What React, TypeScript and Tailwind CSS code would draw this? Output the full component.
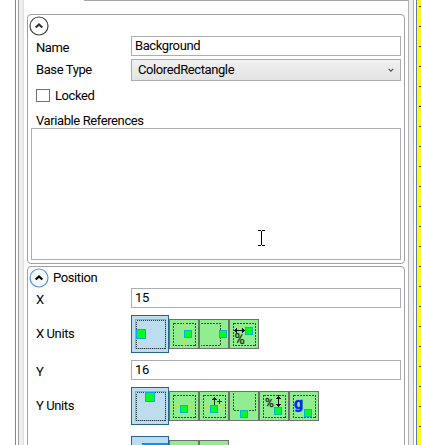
import type { ReactNode } from 'react';

function Expander({ hot = false }: { hot?: boolean }) {
  return (
    <svg width="20" height="20" viewBox="0 0 20 20" className="shrink-0">
      <circle cx="10" cy="10" r="9" fill={hot ? '#f3f9ff' : '#fff'} stroke={hot ? '#5593e8' : '#444'} strokeWidth="1.2" />
      <path d="M6.7 11.6 10 8.4l3.3 3.2" fill="none" stroke={hot ? '#000' : '#333'} strokeWidth="2.1" />
    </svg>
  );
}

function Label({ children, className = '' }: { children: ReactNode; className?: string }) {
  return <span className={`block whitespace-nowrap leading-4 ${className}`}>{children}</span>;
}

function Field({ value }: { value: string }) {
  return <div className="h-5 w-[270px] border border-[#abadb3] bg-white pl-[3px] leading-[17px]">{value}</div>;
}

type Kind = 'left' | 'center' | 'right' | 'percentX' | 'top' | 'middle' | 'invert' | 'bottom' | 'percentY' | 'baseline' | 'none';

const squares: Record<Kind, [number, number]> = {
  left: [4, 13], center: [14, 10], right: [19, 10], percentX: [15, 7],
  top: [13, 4], middle: [10, 13], invert: [10, 13], bottom: [10, 18], percentY: [14, 15], baseline: [14, 17], none: [0, 0],
};

function UnitButton({ kind, selected = false }: { kind: Kind; selected?: boolean }) {
  const [x, y] = squares[kind];
  if (selected) {
    return (
      <div className="size-[38px] shrink-0 border border-[#2c628b] bg-[#bcddee]">
        <svg width="36" height="36" viewBox="0 0 36 36" shapeRendering="crispEdges">
          {kind === 'none'
            ? <rect x="11" y="7" width="24" height="20" fill="#00ff21" stroke="#0094ff" strokeWidth="2" />
            : <>
              <rect x="3.5" y="3.5" width="30" height="29" fill="none" stroke="#93adba" />
              <rect x="4.5" y="4.5" width="29" height="28" fill="none" stroke="#27343b" strokeDasharray="1 1" />
              <rect x={x + .5} y={y + .5} width="9" height="9" fill="#00ff21" stroke="#0da2f2" />
            </>}
        </svg>
      </div>
    );
  }
  return (
    <div className="size-[30px] shrink-0 border border-[#707070] bg-[#90ee90]">
      <svg width="28" height="28" viewBox="0 0 28 28" shapeRendering="crispEdges">
        {kind === 'right'
          ? <path d="M1 3.5H20.5V25.5H1" fill="none" stroke="#334f33" strokeDasharray="2 1" />
          : kind === 'bottom'
            ? <path d="M3.5 1V18.5H25.5V1" fill="none" stroke="#334f33" strokeDasharray="2 1" />
            : kind !== 'none' && <rect x="3.5" y="3.5" width="22" height="22" fill="none" stroke="#334f33" strokeDasharray="2 1" />}
        {kind === 'center' && <path d="M14.5 1v26" stroke="#b5e26f" />}
        {(kind === 'middle' || kind === 'invert') && <path d="M1 14.5h26" stroke="#bedf50" />}
        {kind === 'baseline' && <path d="M1 17.5h26" stroke="#bedf50" />}
        {kind !== 'none' && <rect x={x + .5} y={y + .5} width="7" height="7" fill="#00ff21" stroke="#00b7ce" />}
        {kind === 'percentX' && <>
          <path d="M4 10.5h11M6.5 8v5M5.5 9v3M12.5 8v5M13.5 9v3" stroke="#111" />
          <text x="4.5" y="24" fontSize="14" letterSpacing="0" fill="#183018" stroke="#183018" strokeWidth=".3">%</text>
        </>}
        {kind === 'percentY' && <>
          <path d="M18.5 3v12M16 6.5h5M17 5.5h3M16 12.5h5M17 13.5h3" stroke="#111" />
          <text x="5" y="14.5" fontSize="12" letterSpacing="0" fill="#183018" stroke="#183018" strokeWidth=".3">%</text>
        </>}
        {kind === 'invert' && <path d="M14.5 5v8M12 7.5h5M13 6.5h3M17 9.5h5M19.5 7v5" stroke="#1c2e1c" />}
        {kind === 'baseline' && <text x="4" y="17" fontSize="16" fontWeight="700" fill="#0026ff" stroke="#0026ff" strokeWidth=".4">g</text>}
      </svg>
    </div>
  );
}

export default function App() {
  return (
    <div className="flex h-[445px] w-[421px] overflow-hidden bg-white font-['Roboto','Liberation_Sans',sans-serif] text-[13px] tracking-[-0.4px] text-black">
      <div className="w-4 shrink-0 border-r border-[#828790]" />
      <div className="ml-0.5 w-1.5 shrink-0 border-x border-l-[#a0a0a0] border-r-[#dcdcdc] bg-[#eee]" />
      <main className="w-[384px] shrink-0">
        <div className="ml-[60px] h-px bg-[#a6a6a6]" />
        <section className="mt-[13px] ml-[3px] h-[250px] w-[378px] rounded border border-[#a0a0a0] px-[3px]">
          <div className="flex h-[21px] items-center"><div className="-ml-0.5"><Expander /></div></div>
          <div className="flex h-5">
            <Label className="w-[100px] pt-1 pl-[5px]">Name</Label><Field value="Background" />
          </div>
          <div className="mt-[3px] flex h-[22px]">
            <Label className="w-[100px] pt-[3px] pl-[5px]">Base Type</Label>
            <div className="flex w-[270px] items-center justify-between border border-[#acacac] bg-linear-to-b from-[#f0f0f0] to-[#e4e4e4] pr-1.5 pl-1.5">
              <span>ColoredRectangle</span>
              <svg width="6" height="5" viewBox="0 0 6 5"><path d="m.6.8 2.3 2.4L5.2.8" fill="none" stroke="#555" strokeWidth="1.2" /></svg>
            </div>
          </div>
          <div className="mt-2 flex h-[13px] items-center pl-[5px]">
            <div className="h-[13px] w-3.5 border border-[#707070] bg-white" />
            <span className="pl-[5px]">Locked</span>
          </div>
          <Label className="mt-[11px] h-[15px] pl-[5px]">Variable References</Label>
          <div className="h-[132px] w-[370px] border border-[#abadb3]">
            <svg width="9" height="17" viewBox="0 0 9 17" className="mt-[101px] ml-[225px]" shapeRendering="crispEdges">
              <path d="M1 .5h3M5 .5h3M4.5 1v14M1 15.5h3M5 15.5h3" stroke="#000" />
            </svg>
          </div>
        </section>
        <section className="mt-0.5 ml-[3px] h-[250px] w-[378px] rounded border border-[#a0a0a0] px-[3px]">
          <div className="flex h-[21px] items-center"><div className="-ml-0.5"><Expander hot /></div><span className="pl-1">Position</span></div>
          <div className="flex h-5"><Label className="w-[100px] pt-1 pl-[5px]">X</Label><Field value="15" /></div>
          <div className="mt-[7px] flex h-[38px] items-center">
            <Label className="w-[100px] shrink-0 pl-[5px]">X Units</Label>
            <UnitButton kind="left" selected /><UnitButton kind="center" /><UnitButton kind="right" /><UnitButton kind="percentX" />
          </div>
          <div className="mt-[7px] flex h-5"><Label className="w-[100px] pt-1 pl-[5px]">Y</Label><Field value="16" /></div>
          <div className="mt-[7px] flex h-[38px] items-center">
            <Label className="w-[100px] shrink-0 pl-[5px]">Y Units</Label>
            <UnitButton kind="top" selected /><UnitButton kind="middle" /><UnitButton kind="invert" /><UnitButton kind="bottom" /><UnitButton kind="percentY" /><UnitButton kind="baseline" />
          </div>
          <div className="mt-[11px] flex h-[38px] items-center pl-[100px]">
            <UnitButton kind="none" selected /><UnitButton kind="none" /><UnitButton kind="none" />
          </div>
        </section>
      </main>
      <div className="w-1.5 shrink-0 border-x border-[#b0b0b0] bg-[#eee]" />
      <div className="ml-0.5 w-px shrink-0 bg-[#6577a5]" />
      <div className="flex w-1 shrink-0 flex-col items-end gap-[19px] bg-[#ff0] pt-1.5">
        {Array.from({ length: 22 }, (_, i) => <i key={i} className={`h-px w-0.5 shrink-0 ${i < 5 ? 'bg-[#a00000]' : i === 5 ? 'bg-black' : 'bg-[#006f00]'}`} />)}
      </div>
    </div>
  );
}
